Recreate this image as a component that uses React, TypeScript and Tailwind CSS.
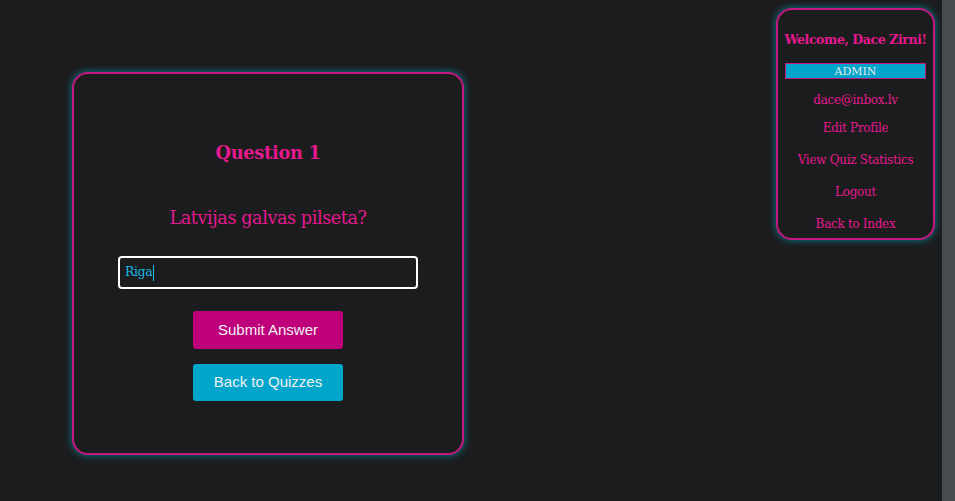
import React from "react";

const slab = "font-['DejaVu_Serif','Liberation_Serif',serif]";
const sans = "font-['Liberation_Sans',Arial,sans-serif]";

function SideLink({ children, mt }: { children: React.ReactNode; mt: string }) {
  return (
    <div className={`${mt} h-[16px] font-['DejaVu_Serif','Liberation_Serif',serif] text-[12px] leading-[16px] tracking-[-0.3px] text-[#e6198f]`}>
      {children}
    </div>
  );
}

export default function App() {
  return (
    <div className="flex h-[501px] w-[955px] overflow-hidden bg-[#1b1c1e]">
      <div className="flex flex-1 items-start">
        <div className="ml-[72px] mt-[72px] flex h-[383px] w-[392px] flex-col items-center rounded-[16px] border-2 border-[#c2187f] bg-[#1b1c1e] pt-[67px] shadow-[0_0_7px_1px_rgba(0,170,200,0.55)]">
          <h1 className={`${slab} h-[24px] text-[17.8px] font-bold leading-[24px] tracking-[-0.3px] text-[#e6198f]`}>
            Question 1
          </h1>
          <p className={`${slab} mt-[40px] h-[26px] text-[17.6px] leading-[26px] tracking-[-0.4px] text-[#e6198f]`}>
            Latvijas galvas pilseta?
          </p>
          <div className="mt-[25px] flex h-[33px] w-[300px] items-center rounded-[4px] border-2 border-white px-[5px]">
            <span className={`${slab} text-[12.5px] leading-none tracking-[-0.4px] text-[#19b8e6]`}>Riga</span>
            <span className="ml-[1px] h-[16px] w-[1px] bg-[#19b8e6]" />
          </div>
          <div className={`${sans} mt-[22px] flex h-[38px] w-[150px] items-center justify-center rounded-[3px] bg-[#be007b] text-[15px] text-[#f2f2f2]`}>
            Submit Answer
          </div>
          <div className={`${sans} mt-[15px] flex h-[37px] w-[150px] items-center justify-center rounded-[3px] bg-[#00a5cc] text-[15px] text-[#f2f2f2]`}>
            Back to Quizzes
          </div>
        </div>
        <div className="ml-auto mr-[7px] mt-[8px] flex h-[232px] w-[159px] flex-col items-center rounded-[16px] border-2 border-[#c2187f] bg-[#1b1c1e] pt-[21px] shadow-[0_0_7px_1px_rgba(0,170,200,0.55)]">
          <div className={`${slab} h-[18px] whitespace-nowrap text-[12.5px] font-bold leading-[18px] tracking-[-0.4px] text-[#e6198f]`}>
            Welcome, Dace Zirni!
          </div>
          <div className={`${slab} mt-[14px] flex h-[16px] w-[141px] items-center justify-center border border-[#c2187f] bg-[#00a5cc] text-[11px] leading-none text-[#e8e8e8]`}>
            ADMIN
          </div>
          <SideLink mt="mt-[13px]">dace@inbox.lv</SideLink>
          <SideLink mt="mt-[12px]">Edit Profile</SideLink>
          <SideLink mt="mt-[16px]">View Quiz Statistics</SideLink>
          <SideLink mt="mt-[16px]">Logout</SideLink>
          <SideLink mt="mt-[16px]">Back to Index</SideLink>
        </div>
      </div>
      <div className="h-full w-[13px] bg-[#474b4d]" />
    </div>
  );
}
